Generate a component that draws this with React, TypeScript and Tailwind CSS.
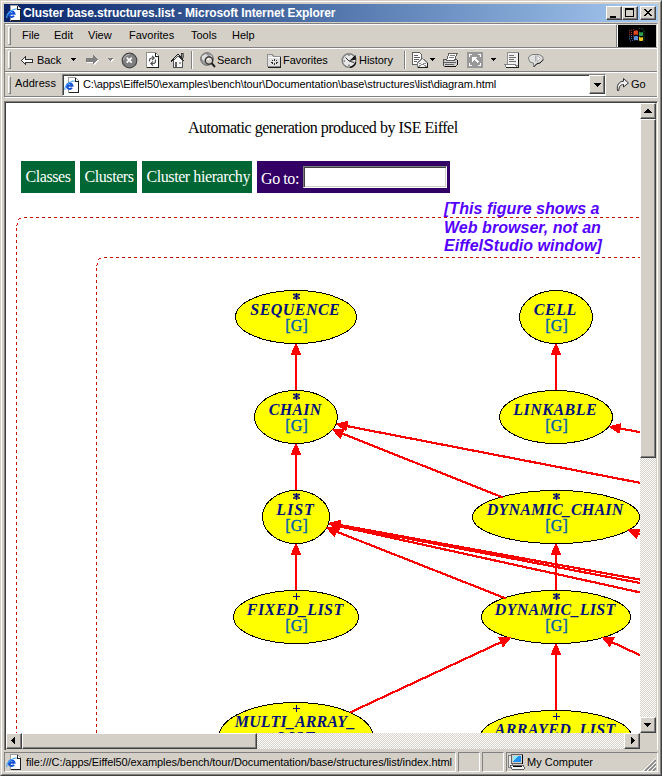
import React from "react";

const SANS = "font-['Liberation_Sans',sans-serif]";

type Pt = [number, number];

function Arrow({ from, tip }: { from: Pt; tip: Pt }) {
  const dx = tip[0] - from[0];
  const dy = tip[1] - from[1];
  const len = Math.hypot(dx, dy);
  const ux = dx / len;
  const uy = dy / len;
  const bx = tip[0] - ux * 11.5;
  const by = tip[1] - uy * 11.5;
  const pts = [
    [tip[0] + ux * 0.5, tip[1] + uy * 0.5],
    [bx - uy * 5.6, by + ux * 5.6],
    [bx + uy * 5.6, by - ux * 5.6],
  ];
  return (
    <g shapeRendering="crispEdges">
      <line x1={from[0]} y1={from[1]} x2={bx} y2={by} stroke="#ff0000" strokeWidth="2.2" />
      <polygon points={pts.map((p) => p.join(",")).join(" ")} fill="#ff0000" />
    </g>
  );
}

const arrows: { from: Pt; tip: Pt }[] = [
  { from: [296, 391], tip: [296, 343.5] },
  { from: [296, 491], tip: [296, 443.5] },
  { from: [296, 591], tip: [296, 543.5] },
  { from: [556, 391], tip: [556, 343.5] },
  { from: [556, 591], tip: [556, 543.5] },
  { from: [556, 711], tip: [556, 643.5] },
  { from: [641, 483], tip: [336, 424] },
  { from: [503, 497.5], tip: [332, 429.5] },
  { from: [641, 579.8], tip: [329, 523] },
  { from: [641, 583.2], tip: [329, 523.5] },
  { from: [641, 592.6], tip: [329, 524] },
  { from: [506, 598.5], tip: [326, 527.5] },
  { from: [645, 433], tip: [609, 426.5] },
  { from: [660, 542], tip: [628, 529.7] },
  { from: [350, 712.5], tip: [511, 637.5] },
  { from: [645, 657.5], tip: [602, 637.5] },
];

type Cls = {
  name: string;
  w: number;
  cx: number;
  top: number;
  rx: number;
  ry?: number;
  mark?: string;
  second?: string;
  generic?: boolean;
};

const classes: Cls[] = [
  { name: "SEQUENCE", w: 89, cx: 296, top: 290.5, rx: 60.5, mark: "*", generic: true },
  { name: "CHAIN", w: 52, cx: 296, top: 390.5, rx: 41.5, mark: "*", generic: true },
  { name: "LIST", w: 37, cx: 296, top: 490.5, rx: 33.5, mark: "*", generic: true },
  { name: "FIXED_LIST", w: 96, cx: 296, top: 590.5, rx: 62.5, mark: "+", generic: true },
  { name: "MULTI_ARRAY_", w: 120, cx: 296, top: 702.5, rx: 77, ry: 34.5, mark: "+", second: "LIST" },
  { name: "CELL", w: 42, cx: 556, top: 290.5, rx: 36.5, generic: true },
  { name: "LINKABLE", w: 83, cx: 556, top: 390.5, rx: 56.5, generic: true },
  { name: "DYNAMIC_CHAIN", w: 136, cx: 556, top: 490.5, rx: 83.5, mark: "*", generic: true },
  { name: "DYNAMIC_LIST", w: 120, cx: 556, top: 590.5, rx: 74.5, mark: "*", generic: true },
  { name: "ARRAYED_LIST", w: 120, cx: 556, top: 710.5, rx: 75.5, mark: "+" },
];

function Mark({ kind, x, y }: { kind: string; x: number; y: number }) {
  return kind === "*" ? (
    <path
      d={`M${x + 0.5} ${y - 3}v7M${x - 3} ${y - 1.5}h2.5M${x + 1.5} ${y - 1.5}h2.5M${x - 3} ${y + 2}h2.5M${x + 1.5} ${y + 2}h2.5M${x - 1.5} ${y + 0.3}h4`}
      stroke="#00007f"
      strokeWidth="1.4"
    />
  ) : (
    <path d={`M${x + 0.5} ${y - 3}v7M${x - 3} ${y + 0.5}h7`} stroke="#00007f" shapeRendering="crispEdges" />
  );
}

function Diagram() {
  return (
    <svg
      viewBox="6 103 634 630"
      width="634"
      height="630"
      className="absolute left-0 top-0 font-['Liberation_Serif',serif]"
    >
      <g stroke="#cc1100" fill="none" strokeDasharray="3 3" shapeRendering="crispEdges">
        <path d="M24 217.5H641" />
        <path d="M16.5 228V735" />
        <path d="M104 257.5H641" />
        <path d="M96.5 268V735" />
      </g>
      <g fill="none" stroke="#cc1100" shapeRendering="crispEdges">
        <path d="M18 219.5h1M19 218.5h2M17.5 223v2M16.5 225v1" />
        <path d="M98 259.5h1M99 258.5h2M97.5 263v2M96.5 265v1" />
      </g>
      {arrows.slice(0, 6).map((a, i) => (
        <Arrow key={i} {...a} />
      ))}
      {classes.map((c) => {
        const ry = c.ry ?? 26.5;
        return (
          <g key={c.name}>
            <ellipse cx={c.cx} cy={c.top + ry} rx={c.rx} ry={ry} fill="#ffff00" stroke="#000" shapeRendering="crispEdges" />
            {c.mark && <Mark kind={c.mark} x={c.cx} y={c.top + 5.5} />}
            <text
              x={c.cx - 1.2 - c.w / 2}
              y={c.top + 24.5}
              textLength={c.w}
              fontSize="16"
              fontWeight="bold"
              fontStyle="italic"
              fill="#00107f"
            >
              {c.name}
            </text>
            {c.second && (
              <text x={c.cx - 19} y={c.top + 40} textLength="37" fontSize="16" fontWeight="bold" fontStyle="italic" fill="#00107f">
                {c.second}
              </text>
            )}
            {c.generic && (
              <text x={c.cx - 10.7} y={c.top + 40.5} textLength="22" fontSize="16" fill="#0060b0" stroke="#0060b0" strokeWidth="0.4">
                [G]
              </text>
            )}
          </g>
        );
      })}
      {arrows.slice(6).map((a, i) => (
        <Arrow key={i} {...a} />
      ))}
    </svg>
  );
}

/* ---------- icons ---------- */

function PageIcon() {
  return (
    <svg width="16" height="16" viewBox="0 0 16 16" className="shrink-0" shapeRendering="crispEdges">
      <path d="M4.500.500h7l3 3v12h-10z" fill="#fff" stroke="#a0a0a0" />
      <path d="M14.500 4v11.500H5M11.500 1v3h3" fill="none" stroke="#202020" />
      <g shapeRendering="auto" fill="none">
        <path d="M3 8.700H8.500A2.900 2.900 0 1 0 8 10.800" stroke="#1450d8" strokeWidth="1.900" />
        <path d="M1.200 12.800C-.6 10.500 5 3.600 10.800 4" stroke="#48a8f8" strokeWidth="1.200" />
      </g>
    </svg>
  );
}

function BackIcon() {
  return (
    <svg width="13" height="11" viewBox="0 0 13 11" shapeRendering="crispEdges">
      <path d="M.5 5.500l4-4v2.500h7v3h-7v2.500z" fill="#fff" stroke="#303030" />
    </svg>
  );
}

function ForwardIcon() {
  return (
    <svg width="14" height="12" viewBox="0 0 14 12" shapeRendering="crispEdges">
      <path d="M1 5h7V2l5 5-5 4V9H1z" fill="#fff" />
      <path d="M0 4h7V1l5 4.500-5 4.500V8H0z" fill="#808080" />
    </svg>
  );
}

function Caret({ dim }: { dim?: boolean }) {
  return (
    <svg width="6" height="4" viewBox="0 0 6 4" shapeRendering="crispEdges">
      {dim && <path d="M1 1h5v1h-1v1h-1v1h-1V3z" fill="#fff" />}
      <path d="M0 0h5v1H4v1H3v1H2V2H1V1H0z" fill={dim ? "#808080" : "#000"} />
    </svg>
  );
}

function StopIcon() {
  return (
    <svg width="17" height="17" viewBox="0 0 17 17">
      <circle cx="8.500" cy="8.500" r="7.300" fill="#808080" stroke="#484848" strokeWidth="1.200" />
      <path d="M2.500 8a6 6 0 0 1 6-5.500" stroke="#c0c0c0" fill="none" />
      <path d="M5.700 5.700l5 5M10.700 5.700l-5 5" stroke="#fff" strokeWidth="1.800" />
    </svg>
  );
}

function RefreshIcon() {
  return (
    <svg width="14" height="16" viewBox="0 0 14 16" shapeRendering="crispEdges">
      <path d="M.5.500h9l3 3v12H.500z" fill="#fff" stroke="#909090" />
      <path d="M12.500 4v11.500H1M9.500 1v3h3" fill="none" stroke="#202020" />
      <g shapeRendering="auto" fill="none" stroke="#505050" strokeWidth="1.200">
        <path d="M3.500 9.500V8.500q0-2.500 2.500-2.500h1.500M6 3.800L8.200 6 6 8.200" />
        <path d="M9.500 7.500v1.500q0 2.500-2.500 2.500H5.500M7 9.300L4.800 11.500 7 13.700" />
      </g>
    </svg>
  );
}

function HomeIcon() {
  return (
    <svg width="16" height="16" viewBox="0 0 16 16" shapeRendering="crispEdges">
      <path d="M11 1h2v5h-2z" fill="#808080" stroke="#202020" strokeWidth=".6" />
      <path d="M3.500 8.500L8 4l4.500 4.500v6.500h-9z" fill="#f8f8f8" stroke="#505050" />
      <path d="M1 9.500l7-7.500 6.500 7.500" fill="none" stroke="#202020" />
      <path d="M5 10h2v5H5z" fill="#606060" />
      <path d="M9 10h2v2H9z" fill="#a0a0a0" />
    </svg>
  );
}

function SearchIcon() {
  return (
    <svg width="17" height="17" viewBox="0 0 17 17">
      <circle cx="7" cy="7" r="6.300" fill="#989898" stroke="#686868" />
      <path d="M2 4l4-2 2 2-3 2-1 3-2-2zM9 2l3 2v2z" fill="#e0e0e0" />
      <circle cx="9" cy="8.500" r="3.600" fill="#d4d0c8" stroke="#303030" strokeWidth="1.200" />
      <path d="M7.500 8l2-1.500" stroke="#fff" strokeWidth="1.300" />
      <path d="M11.500 11l3.500 4" stroke="#202020" strokeWidth="1.900" />
    </svg>
  );
}

function FavoritesIcon() {
  return (
    <svg width="16" height="15" viewBox="0 0 16 15" shapeRendering="crispEdges">
      <path d="M1.500 4V1.500h5l1 2h7v10h-13z" fill="#e0e0e0" stroke="#909090" />
      <path d="M14.500 3.500v10.500H2" fill="none" stroke="#202020" />
      <path d="M2 4.500h12" stroke="#fff" />
      <path d="M8 6h1v2H8zM8 10h1v2H8zM5 8.500h2v1H5zM10 8.500h2v1h-2zM6 7h1v1H6zM10 7h1v1h-1zM6 10h1v1H6zM10 10h1v1h-1z" fill="#303030" />
    </svg>
  );
}

function HistoryIcon() {
  return (
    <svg width="17" height="17" viewBox="0 0 17 17">
      <circle cx="8" cy="8.500" r="6.800" fill="#e8e8e8" stroke="#808080" strokeWidth="1.500" />
      <path d="M8 9l6.500-6 .8 4.500z" fill="#181818" />
      <path d="M8 9L4.500 5.500M8 9l5 1.500" stroke="#303030" />
      <path d="M8 2.500v1.500M2.500 9H4M8 14v-1.500" stroke="#404040" />
      <path d="M9 15.300a7 7 0 0 0 5.800-5" stroke="#101010" fill="none" strokeWidth="1.300" />
    </svg>
  );
}

function MailIcon() {
  return (
    <svg width="17" height="16" viewBox="0 0 17 16" shapeRendering="crispEdges">
      <path d="M.5.500h7l2 2v10H.500z" fill="#fff" stroke="#606060" />
      <path d="M2 3.500h4M2 5.500h6M2 7.500h5M2 9.500h3" stroke="#606060" />
      <path d="M5.500 10.500l5-4 5 4v5h-10z" fill="#f4f4f4" stroke="#808080" />
      <path d="M5.500 15.500l4-3h2l4 3M6 10.500l4 2 5-2" stroke="#909090" fill="none" />
      <path d="M15.500 11v4.500H6" stroke="#202020" fill="none" />
    </svg>
  );
}

function PrintIcon() {
  return (
    <svg width="17" height="16" viewBox="0 0 17 16" shapeRendering="crispEdges">
      <path d="M1.500 7.500h13l1 1v4l-2 2h-11l-1-1z" fill="#d0d0d0" stroke="#505050" />
      <path d="M4.500 8.500l2.500-7h8l-2.500 7z" fill="#fff" stroke="#606060" />
      <path d="M8 3.500h5M7 5.500h5" stroke="#808080" />
      <path d="M2 10.500h12M3 12.500h9" stroke="#606060" />
      <path d="M15.500 8v5M13.500 14.500H3" stroke="#101010" />
    </svg>
  );
}

function FullscreenIcon() {
  return (
    <svg width="16" height="16" viewBox="0 0 16 16" shapeRendering="crispEdges">
      <path d="M0 0h16v16H0z" fill="#989898" />
      <path d="M2.500 5V2.500H5M11 2.500h2.500V5M13.500 11v2.500H11M5 13.500H2.500V11" stroke="#fff" fill="none" />
      <path d="M5 5h5L8.500 6.500l3 3-1.500 1.500-3-3L5 10z" fill="#fff" />
    </svg>
  );
}

function EditIcon() {
  return (
    <svg width="16" height="16" viewBox="0 0 16 16" shapeRendering="crispEdges">
      <path d="M3.500.500h11v13h-11z" fill="#f0f0f0" stroke="#909090" />
      <path d="M.5 12.500h11l1 2.500H2z" fill="#fff" stroke="#808080" />
      <path d="M14.500 1v14.500H2" fill="none" stroke="#202020" />
      <path d="M5 3.500h5M5 5.500h7M5 7.500h5M5 9.500h7" stroke="#707070" />
    </svg>
  );
}

function DiscussIcon() {
  return (
    <svg width="16" height="15" viewBox="0 0 16 15">
      <path d="M4 1.500h7l4 2.500v3.500l-3.500 2.500-3 .500-3 3.500V10L2 9 .600 6V4z" fill="#e0e0e0" stroke="#808080" />
      <path d="M7.500 2.500v6M9 2.500l3.500 3L9 8.500z" fill="#fff" stroke="#a0a0a0" strokeWidth=".8" />
      <path d="M15.200 6.500l-3.200 3.500-3 .8-3 3" stroke="#202020" fill="none" />
    </svg>
  );
}

function GoIcon() {
  return (
    <svg width="14" height="15" viewBox="0 0 14 15">
      <path d="M1.500 13.500C.500 8 3 4.500 7.500 4.200V1.500L12.500 6l-5 4V7.500C4.500 7.500 3 9.500 2.800 13.500z" fill="#f0f0f0" stroke="#303030" />
    </svg>
  );
}

function WindowsFlag() {
  return (
    <svg width="18" height="18" viewBox="0 0 18 18">
      <g fill="none" strokeDasharray="1 1">
        <path d="M1 4l5-1.500M1 6l5-1M1 8l5-1" stroke="#c84038" />
        <path d="M1 10l5-1M1 12l5-1M2 14l4-1" stroke="#5070c0" />
        <path d="M11 1.500q3-1 5 2v11" stroke="#308040" />
      </g>
      <path d="M6 4q2.500-1.500 4 0v4q-1.800-1-4 0z" fill="#e04820" />
      <path d="M11 4.500q2 1.500 4 .500v3.500q-2 1-4 0z" fill="#30a050" />
      <path d="M6 9.500q2.500-1.500 4 0v4q-1.800-1-4 0z" fill="#6090d8" />
      <path d="M11 9.500q2 1.500 4 .500v3.500q-2 1-4 0z" fill="#f0c820" />
    </svg>
  );
}

function ComputerIcon() {
  return (
    <svg width="17" height="16" viewBox="0 0 17 16" shapeRendering="crispEdges">
      <path d="M.5 1h4v12h-4z" fill="#e8e8e8" stroke="#808080" />
      <path d="M3.500.500h11v9h-11z" fill="#d4d0c8" stroke="#606060" />
      <path d="M5 2h8v6H5z" fill="#2090f0" />
      <path d="M5 2h5L6 7H5z" fill="#90e8ff" />
      <path d="M2 11h13l1 2v2H4z" fill="#f4f4f4" stroke="#404040" strokeWidth=".8" />
      <path d="M5 12.500h9M14.500 1v9" stroke="#000" />
    </svg>
  );
}

/* ---------- chrome ---------- */

const raised =
  "border border-t-white border-l-white border-r-[#404040] border-b-[#404040] bg-[#d4d0c8] shadow-[inset_-1px_-1px_0_#808080]";

const track =
  "bg-[repeating-conic-gradient(#ffffff_0_25%,#d4d0c8_0_50%)] bg-size-[2px_2px]";

function Grip() {
  return <div className="h-[18px] w-[3px] shrink-0 border border-t-white border-l-white border-r-[#808080] border-b-[#808080]" />;
}

function Divider() {
  return <div className="h-[18px] w-[2px] shrink-0 border-l border-l-[#808080] border-r border-r-white" />;
}

function ScrollButton({ path }: { path: string }) {
  return (
    <div className={`flex size-4 shrink-0 items-center justify-center ${raised}`}>
      <svg width="8" height="8" viewBox="0 0 8 8" shapeRendering="crispEdges">
        <path d={path} />
      </svg>
    </div>
  );
}

function CaptionButton({ children }: { children: React.ReactNode }) {
  return (
    <div className={`h-[14px] w-4 ${raised}`}>
      <svg width="14" height="12" viewBox="0 0 14 12" shapeRendering="crispEdges" className="block">
        {children}
      </svg>
    </div>
  );
}

function TitleBar() {
  return (
    <div className="flex h-[18px] items-center bg-linear-to-r from-[#0a246a] to-[#a6caf0] pl-[2px] pr-[2px]">
      <PageIcon />
      <span className="ml-[1px] whitespace-nowrap text-[12px] font-bold tracking-[-0.11px] text-white">
        Cluster base.structures.list - Microsoft Internet Explorer
      </span>
      <div className="ml-auto flex">
        <CaptionButton>
          <path d="M3 9h6v2H3z" />
        </CaptionButton>
        <CaptionButton>
          <path d="M2.500 1.500h8v8h-8zM2 2.500h9" fill="none" stroke="#000" />
        </CaptionButton>
        <div className="w-[2px]" />
        <CaptionButton>
          <path d="M3 2h2v1h1v1h2V3h1V2h2v1h-1v1H9v1H8v1h1v1h1v1h1v1H9V8H8V7H6v1H5v1H3V8h1V7h1V6h1V5H5V4H4V3H3z" />
        </CaptionButton>
      </div>
    </div>
  );
}

function MenuBar() {
  const items: [string, string][] = [
    ["File", "w-[32px]"],
    ["Edit", "w-[34px]"],
    ["View", "w-[41px]"],
    ["Favorites", "w-[62px]"],
    ["Tools", "w-[41px]"],
    ["Help", "w-[32px]"],
  ];
  return (
    <div className="flex h-[24px] border-b border-b-[#808080]">
      <div className="flex flex-1 items-center border-t border-t-white pl-[3px]">
        <Grip />
        <div className="ml-[11px] flex pb-[1px]">
          {items.map(([t, w]) => (
            <span key={t} className={`shrink-0 ${w}`}>
              {t}
            </span>
          ))}
        </div>
      </div>
      <div className="mt-[1px] w-px bg-[#808080]" />
      <div className="mr-px mt-[1px] flex w-[39px] items-center justify-center border-l border-l-white bg-black">
        <WindowsFlag />
      </div>
    </div>
  );
}

function Toolbar() {
  return (
    <div className="flex h-[24px] items-center border-b border-b-[#808080] border-t border-t-white pl-[3px] tracking-[-0.05px]">
      <Grip />
      <div className="ml-[10px] w-[16px]">
        <BackIcon />
      </div>
      <span className="w-[34px]">Back</span>
      <div className="w-[15px]">
        <Caret />
      </div>
      <div className="w-[22px]">
        <ForwardIcon />
      </div>
      <div className="w-[13px]">
        <Caret dim />
      </div>
      <div className="w-[25px]">
        <StopIcon />
      </div>
      <div className="w-[24px]">
        <RefreshIcon />
      </div>
      <div className="w-[21px]">
        <HomeIcon />
      </div>
      <Divider />
      <div className="ml-[7px] w-[17px]">
        <SearchIcon />
      </div>
      <span className="w-[49px]">Search</span>
      <div className="w-[17px]">
        <FavoritesIcon />
      </div>
      <span className="w-[58px]">Favorites</span>
      <div className="w-[18px]">
        <HistoryIcon />
      </div>
      <span className="w-[45px]">History</span>
      <Divider />
      <div className="ml-[6px] w-[18px]">
        <MailIcon />
      </div>
      <div className="w-[12px]">
        <Caret />
      </div>
      <div className="w-[25px]">
        <PrintIcon />
      </div>
      <div className="w-[24px]">
        <FullscreenIcon />
      </div>
      <div className="w-[13px]">
        <Caret />
      </div>
      <div className="w-[24px]">
        <EditIcon />
      </div>
      <DiscussIcon />
    </div>
  );
}

function AddressBar() {
  return (
    <div className="flex h-[25px] items-center border-b border-b-[#808080] border-t border-t-white pl-[3px]">
      <Grip />
      <span className="ml-[4px] w-[47px] pb-[2px] tracking-[0.1px]">Address</span>
      <div className="flex h-[22px] w-[544px] items-center border border-t-[#808080] border-l-[#808080] border-r-white border-b-white bg-white shadow-[inset_1px_1px_0_#404040]">
        <div className="ml-[1px] flex w-[19px]">
          <PageIcon />
        </div>
        <span className="whitespace-nowrap tracking-[-0.095px] text-black">
          C:\apps\Eiffel50\examples\bench\tour\Documentation\base\structures\list\diagram.html
        </span>
        <div className={`ml-auto flex h-[19px] w-4 items-center justify-center ${raised}`}>
          <svg width="7" height="4" viewBox="0 0 7 4" shapeRendering="crispEdges">
            <path d="M0 0h7v1H6v1H5v1H4v1H3V3H2V2H1V1H0z" />
          </svg>
        </div>
      </div>
      <div className="ml-[10px] w-[15px]">
        <GoIcon />
      </div>
      <span>Go</span>
    </div>
  );
}

function PageContent() {
  return (
    <div className="relative h-[630px] w-[634px] overflow-hidden bg-white font-['Liberation_Serif',serif] text-[16px] leading-[18px] tracking-[-0.42px] text-black">
      <Diagram />
      <p className="pl-[182px] pt-[16px] tracking-[-0.49px]">Automatic generation produced by ISE Eiffel</p>
      <div className="mt-[24px] flex h-[32px] gap-[5px] whitespace-nowrap pl-[15px] text-white">
        <span className="w-[54px] bg-[#006633] pl-[4.5px] pt-[7px]">Classes</span>
        <span className="w-[57px] bg-[#006633] pl-[4.5px] pt-[7px]">Clusters</span>
        <span className="w-[110px] bg-[#006633] pl-[4.5px] pt-[7px]">Cluster hierarchy</span>
        <div className="flex w-[193px] bg-[#330066] pl-[4px]">
          <span className="w-[42px] pt-[9px]">Go to:</span>
          <div className="mt-[5px] h-[22px] w-[144px] border border-t-[#808080] border-l-[#808080] border-r-white border-b-white bg-white shadow-[inset_1px_1px_0_#404040,inset_-1px_-1px_0_#d4d0c8]" />
        </div>
      </div>
      <div className="absolute left-[438px] top-[97px] whitespace-nowrap font-['Liberation_Sans',sans-serif] text-[16px] font-bold italic leading-[18.5px] tracking-[0.04px] text-[#5500ff]">
        <div>[This figure shows a</div>
        <div>Web browser, not an</div>
        <div>EiffelStudio window]</div>
      </div>
    </div>
  );
}

function StatusPanel({ className, children }: { className: string; children?: React.ReactNode }) {
  return (
    <div className={`flex h-[20px] shrink-0 items-center whitespace-nowrap border border-t-[#808080] border-l-[#808080] border-r-white border-b-white ${className}`}>
      {children}
    </div>
  );
}

function StatusBar() {
  return (
    <div className="mt-[2px] flex h-[20px] gap-[2px]">
      <StatusPanel className="w-[452px] pl-[1px]">
        <PageIcon />
        <span className="ml-[4px] tracking-[-0.09px]">
          file:///C:/apps/Eiffel50/examples/bench/tour/Documentation/base/structures/list/index.html
        </span>
      </StatusPanel>
      <StatusPanel className="w-[22px]" />
      <StatusPanel className="w-[22px]" />
      <StatusPanel className="w-[152px] pl-[1px]">
        <ComputerIcon />
        <span className="ml-[2px]">My Computer</span>
        <svg width="13" height="13" viewBox="0 0 13 13" className="mb-[-4px] ml-auto mr-[1px]">
          <path d="M0 13L13 0M4 13l9-9M8 13l5-5" stroke="#fff" />
          <path d="M2 13L13 2M6 13l7-7M10 13l3-3" stroke="#808080" strokeWidth="1.500" />
        </svg>
      </StatusPanel>
    </div>
  );
}

export default function App() {
  return (
    <div className={`h-[776px] w-[662px] overflow-hidden border border-b-[#404040] border-l-[#d4d0c8] border-r-[#404040] border-t-[#d4d0c8] bg-[#d4d0c8] text-[11px] leading-[13px] text-black ${SANS}`}>
      <div className="h-full border border-t-white border-l-white border-r-[#808080] border-b-[#808080] px-[2px] pt-[2px]">
        <TitleBar />
        <div className="mt-px border border-t-[#808080] border-l-[#808080] border-r-white border-b-white">
          <MenuBar />
          <Toolbar />
          <AddressBar />
        </div>
        <div className="mt-[3px] flex h-[649px] border-l border-r border-t border-l-[#808080] border-r-white border-t-[#808080]">
          <div className="flex flex-1 flex-col border-l border-t border-l-[#404040] border-t-[#404040]">
            <div className="flex">
              <PageContent />
              <div className={`flex w-4 flex-col ${track}`}>
                <ScrollButton path="M4 2h1v1h1v1h1v1h1v1H0V5h1V4h1V3h1V2z" />
                <div className={`h-[339px] ${raised}`} />
                <div className="mt-auto">
                  <ScrollButton path="M0 2h7v1H6v1H5v1H4v1H3V5H2V4H1V3H0z" />
                </div>
              </div>
            </div>
            <div className="flex">
              <div className={`flex w-[634px] ${track}`}>
                <ScrollButton path="M5 0v7H4V6H3V5H2V4H1V3h1V2h1V1h1V0z" />
                <div className={`w-[235px] ${raised}`} />
                <div className="ml-auto">
                  <ScrollButton path="M3 0v7h1V6h1V5h1V4h1V3H6V2H5V1H4V0z" />
                </div>
              </div>
              <div className="size-4 bg-[#d4d0c8]" />
            </div>
          </div>
        </div>
        <StatusBar />
      </div>
    </div>
  );
}
